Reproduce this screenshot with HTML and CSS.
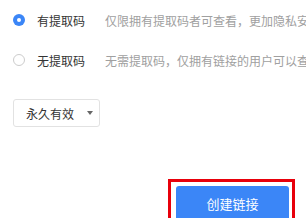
FILE: index.html
```html
<!DOCTYPE html>
<html>
<head>
<meta charset="utf-8">
<link rel="stylesheet" href="styles.css">
</head>
<body>
<div class="panel">
  <div class="option">
    <span class="radio checked"></span>
    <span class="label">有提取码</span>
    <span class="desc">仅限拥有提取码者可查看，更加隐私安全</span>
  </div>
  <div class="option">
    <span class="radio"></span>
    <span class="label">无提取码</span>
    <span class="desc">无需提取码，仅拥有链接的用户可以查看</span>
  </div>
  <div class="select">
    <span class="select-text">永久有效</span>
    <span class="caret"></span>
  </div>
  <div class="actions">
    <div class="highlight">
      <button class="btn">创建链接</button>
    </div>
  </div>
</div>
</body>
</html>
```

FILE: styles.css
```css
html, body {
  margin: 0;
  padding: 0;
  background: #fff;
  overflow: hidden;
}
body {
  width: 306px;
  height: 218px;
  font-family: "Noto Sans CJK SC", "Noto Sans", sans-serif;
  font-size: 12px;
}
.panel {
  padding-left: 13px;
  display: flex;
  flex-direction: column;
}
.option {
  height: 40px;
  display: flex;
  align-items: center;
  white-space: nowrap;
}
.radio {
  width: 12px;
  height: 12px;
  box-sizing: border-box;
  border-radius: 50%;
  border: 1px solid #cccccc;
  background: #fff;
  flex: none;
  position: relative;
}
.radio.checked {
  border: none;
  background: #3b86f7;
}
.radio.checked::after {
  content: "";
  position: absolute;
  left: 4px;
  top: 4px;
  width: 4px;
  height: 4px;
  border-radius: 50%;
  background: #fff;
}
.label {
  margin-left: 12px;
  color: #333;
  width: 48px;
  flex: none;
}
.desc {
  margin-left: 20px;
  color: #a0a0a0;
}
.select {
  margin-top: 19px;
  width: 87px;
  height: 28px;
  box-sizing: border-box;
  border: 1px solid #e2e2e2;
  border-radius: 3px;
  display: flex;
  align-items: center;
  padding-left: 12px;
}
.select-text {
  color: #333;
}
.caret {
  margin-left: 13px;
  width: 0;
  height: 0;
  border-left: 3px solid transparent;
  border-right: 3px solid transparent;
  border-top: 4px solid #666;
}
.actions {
  margin-top: 52px;
  display: flex;
  padding-left: 155px;
}
.highlight {
  border: 3px solid #e8000b;
  padding: 4px 3px 0 5px;
}
.btn {
  display: block;
  width: 113px;
  height: 35px;
  border: none;
  border-radius: 3px;
  background: #3b86f7;
  color: #fff;
  font-family: "Noto Sans CJK SC", "Noto Sans", sans-serif;
  font-size: 13px;
  padding: 0;
}
```
